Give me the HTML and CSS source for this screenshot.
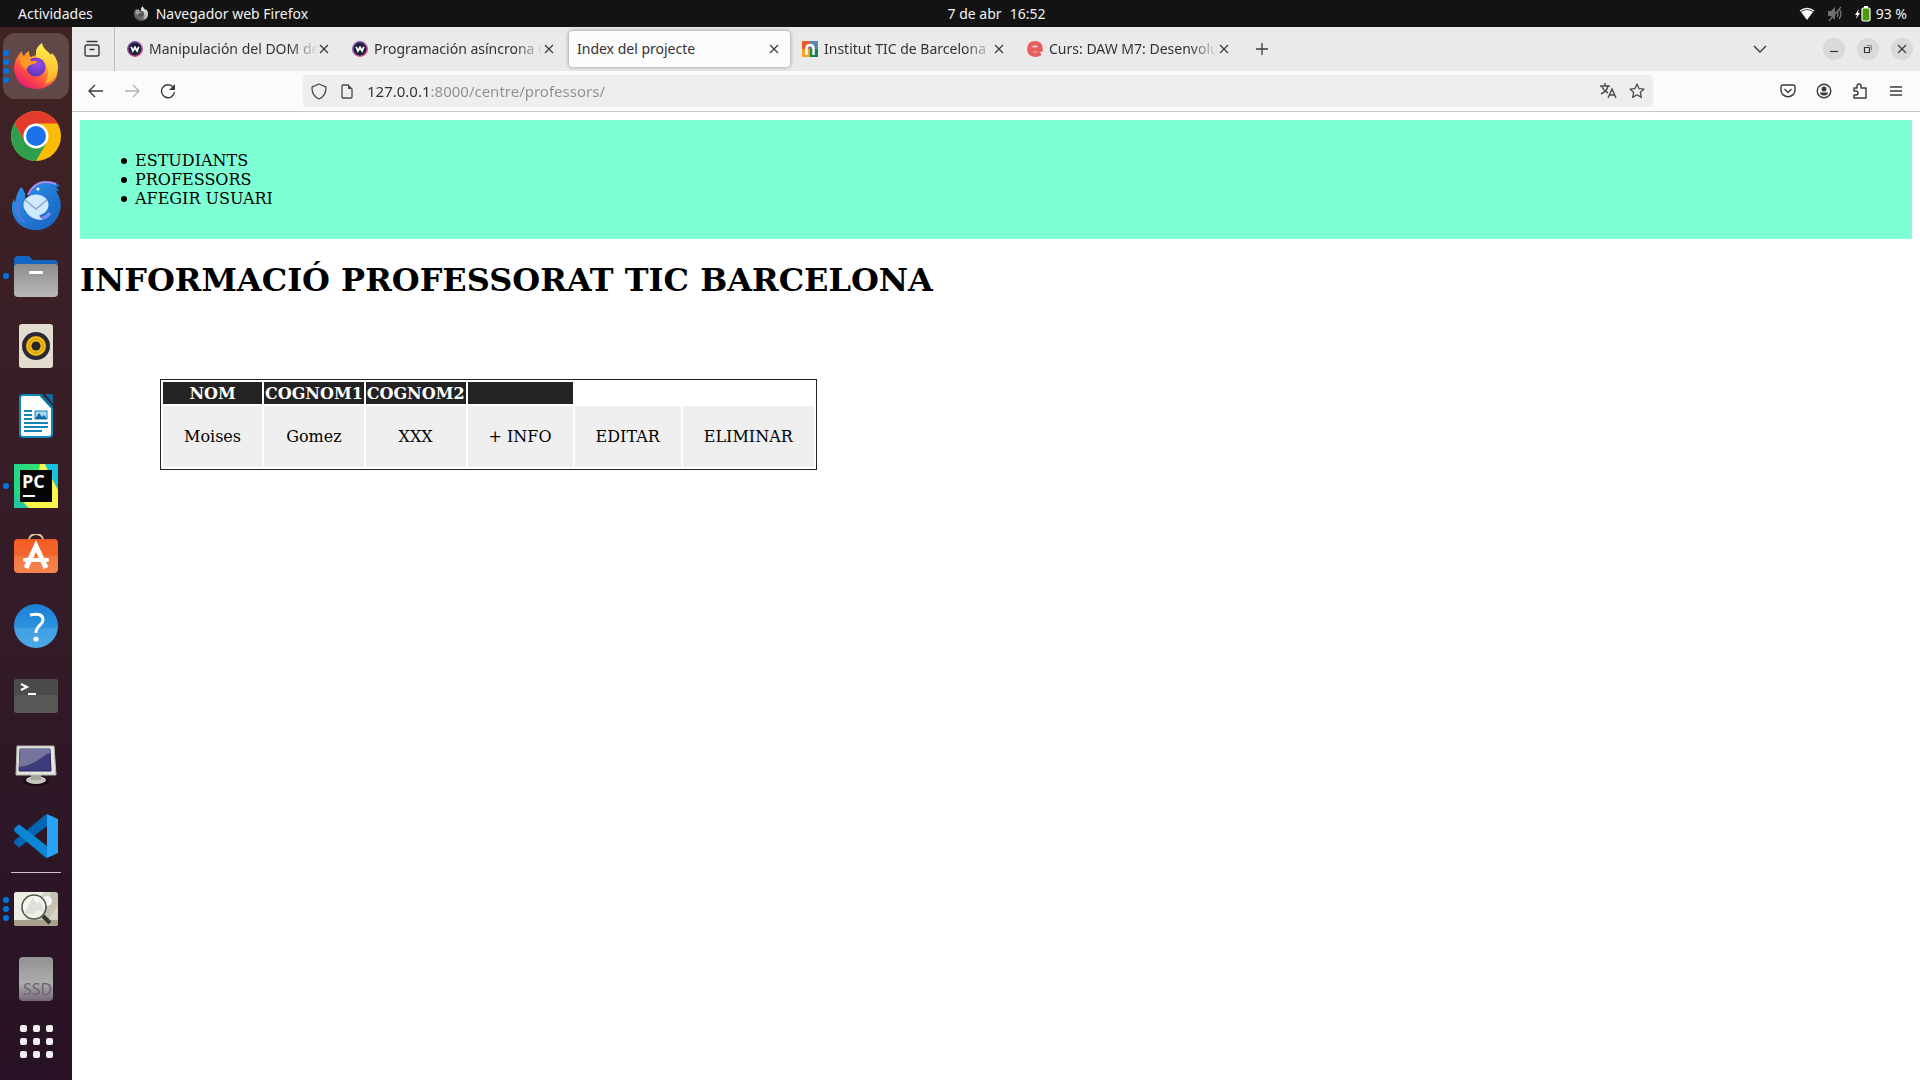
FILE: index.html
```html
<!DOCTYPE html>
<html lang="ca">
<head>
<meta charset="utf-8">
<title>Index del projecte</title>
<link rel="stylesheet" href="styles.css">
</head>
<body>
<svg class="defs" width="0" height="0" aria-hidden="true">
  <defs>
    <linearGradient id="ff-body" x1="1" y1="0" x2="0.2" y2="1"><stop offset="0" stop-color="#ffe33b"/><stop offset=".4" stop-color="#ff9a2c"/><stop offset=".7" stop-color="#ff4a45"/><stop offset="1" stop-color="#e0147a"/></linearGradient>
    <linearGradient id="ff-flame" x1="0" y1="0" x2="0" y2="1"><stop offset="0" stop-color="#fff04d"/><stop offset="1" stop-color="#ffb029"/></linearGradient>
    <radialGradient id="ff-globe" cx=".6" cy=".35" r=".7"><stop offset="0" stop-color="#9b4bea"/><stop offset="1" stop-color="#5a35b8"/></radialGradient>
    <linearGradient id="grey-v" x1="0" y1="0" x2="0" y2="1"><stop offset="0" stop-color="#8d8d8d"/><stop offset="1" stop-color="#b9b9b9"/></linearGradient>
    <linearGradient id="tb-blue" x1="0" y1="0" x2="1" y2="1"><stop offset="0" stop-color="#2f95f0"/><stop offset="1" stop-color="#1560bd"/></linearGradient>
    <linearGradient id="store" x1="0" y1="0" x2="0" y2="1"><stop offset="0" stop-color="#f45b22"/><stop offset=".5" stop-color="#f4672f"/><stop offset=".5" stop-color="#f37840"/><stop offset="1" stop-color="#f48450"/></linearGradient>
    <linearGradient id="help" x1="0" y1="0" x2="0" y2="1"><stop offset="0" stop-color="#1c7fd6"/><stop offset=".54" stop-color="#2b93df"/><stop offset=".54" stop-color="#409fe2"/><stop offset="1" stop-color="#4da9e8"/></linearGradient>
    <linearGradient id="ssd" x1="0" y1="0" x2="0" y2="1"><stop offset="0" stop-color="#929292"/><stop offset=".6" stop-color="#adadad"/><stop offset="1" stop-color="#75687a"/></linearGradient>
    <linearGradient id="pc" x1="0" y1="0" x2="1" y2="0"><stop offset="0" stop-color="#21d789"/><stop offset="1" stop-color="#3bea62"/></linearGradient>
    <linearGradient id="ring" x1="0" y1="0" x2="1" y2="1"><stop offset="0" stop-color="#6a55c8"/><stop offset="1" stop-color="#e0457f"/></linearGradient>
    <symbol id="firefox" viewBox="0 0 44 46">
      <path fill="url(#ff-body)" d="M0 26C0 19 3 13 8 8c0 2 0 4 2 5 1-2 3-4 5-5 0 3 0 5 2 6 6-3 13-3 17 0 4-3 6 3 8 7 6 14-6 25-20 25S1 37 0 26z"/>
      <path fill="url(#ff-flame)" d="M28 0c1 6 6 8 9 12l1-2c5 5 6 10 6 15-1 9-7 14-13 16 3-6 4-14 1-19-4-4-11-4-10-12 0-5 3-8 6-10z"/>
      <circle cx="22" cy="24" r="9.500" fill="url(#ff-globe)"/>
      <path fill="#ff9724" d="M6 14c5-2 9 0 11 4h6c0 3-4 3-7 4-3 2-3 4-4 4-4-2-7-6-6-12z"/>
    </symbol>
    <symbol id="close" viewBox="0 0 10 10"><path d="M1 1l8 8M9 1L1 9" fill="none" stroke="#3b3b3b" stroke-width="1.2"/></symbol>
    <symbol id="w-logo" viewBox="0 0 16 16"><circle cx="8" cy="8" r="7.2" fill="#1b2238" stroke="url(#ring)" stroke-width="1.5"/><path d="M4.2 5.8l1.7 4.2L8 6.3l2.1 3.7 1.7-4.2" fill="none" stroke="#fff" stroke-width="1.7"/></symbol>
  </defs>
</svg>

<header class="topbar">
  <div class="topbar-left">
    <button class="bar-item" type="button">Actividades</button>
    <button class="bar-item" type="button"><svg class="mono" width="14" height="15"><use href="#firefox"/></svg>Navegador web Firefox</button>
  </div>
  <button class="bar-item clock" type="button"><span>7 de abr</span><span>16:52</span></button>
  <div class="topbar-status">
    <svg width="16" height="14" viewBox="0 0 16 14"><path fill="#fff" d="M8 13L2 5q6-4 12 0z"/><path d="M1 4q7-5 14 0" fill="none" stroke="#fff" stroke-width="1.4"/></svg>
    <svg width="16" height="16" viewBox="0 0 16 16"><path fill="#6f6f6f" d="M1 5h3l4-4v13l-4-4H1z"/><path d="M10 5q2 3 0 6M12 3q4 5 0 10M14 1L2 15" fill="none" stroke="#6f6f6f" stroke-width="1.4"/></svg>
    <span class="battery"><svg width="16" height="16" viewBox="0 0 16 16"><path fill="#fff" d="M4 3L0 9h2l-1 4 4-6H3z"/><rect x="7" y="2" width="8" height="13" rx="1.5" fill="#4e9a06" stroke="#fff" stroke-width="1.2"/><path fill="#fff" d="M9 0h4v2H9z"/></svg>93 %</span>
  </div>
</header>

<div class="desktop">
  <nav class="dock" aria-label="Aplicaciones">
    <div class="dock-list">
      <button class="app active" type="button" aria-label="Firefox"><span class="dots"><i></i><i></i><i></i><i></i></span><svg width="44" height="46"><use href="#firefox"/></svg></button>
      <button class="app" type="button" aria-label="Chrome"><svg width="50" height="50" viewBox="0 0 50 50"><circle cx="25" cy="25" r="25" fill="#fbbc05"/><path fill="#e33b2e" d="M3.4 12.5a25 25 0 0 1 43.2 0H25L14.2 31.2z"/><path fill="#2f9e4d" d="M3.4 12.5A25 25 0 0 0 25 50l10.8-18.7H14.2z"/><circle cx="25" cy="25" r="12.5" fill="#fff"/><circle cx="25" cy="25" r="10" fill="#1a73e8"/></svg></button>
      <button class="app" type="button" aria-label="Thunderbird"><svg width="50" height="50" viewBox="0 0 50 50"><path fill="url(#tb-blue)" d="M10 6c4 4 5 8 4 14h3C19 8 26 1 36 1c6 0 10 1 13 4l-4 1 3 4h-3c4 6 6 12 4 20-3 11-12 19-23 19C12 49 2 41 1 28c0-4 0-7 2-10l1 4C5 15 7 10 10 6z"/><path d="M17 14C21 5 27 1 35 1q5 0 10 2" fill="none" stroke="#a58cf2" stroke-width="2"/><path d="M8 19C5 27 6 36 13 41" fill="none" stroke="#5676dc" stroke-width="2.500"/><path d="M17 31c5 8 16 9 22 1" fill="none" stroke="#7c8df0" stroke-width="3"/><ellipse cx="25" cy="24" rx="12.500" ry="10.500" fill="#cfeaff"/><path fill="#cfeaff" d="M15 31q5 7 16 8-3-3-3-6z"/><path d="M14 19l11 9 11-9" fill="none" stroke="#8fa8c4" stroke-width="1.500"/><circle cx="27" cy="8" r="1.500" fill="#fff"/></svg></button>
      <button class="app" type="button" aria-label="Archivos"><span class="dots"><i></i></span><svg width="44" height="41" viewBox="0 0 44 41"><path fill="#1166c2" d="M0 12V4q0-4 4-4h11l4 4h21q4 0 4 4v8H0z"/><rect y="8" width="44" height="33" rx="4" fill="url(#grey-v)"/><rect x="15" y="15" width="14" height="3" rx="1" fill="#fff"/></svg></button>
      <button class="app" type="button" aria-label="Rhythmbox"><svg width="34" height="44" viewBox="0 0 34 44"><rect width="34" height="44" rx="3" fill="#e3ddd0"/><circle cx="17" cy="22" r="14" fill="#2b2733"/><circle cx="17" cy="22" r="10" fill="#edb916"/><circle cx="17" cy="22" r="7" fill="none" stroke="#c7960c"/><circle cx="17" cy="22" r="4.5" fill="#26262b"/></svg></button>
      <button class="app" type="button" aria-label="LibreOffice Writer"><svg width="34" height="44" viewBox="0 0 34 44"><path fill="#fff" stroke="#1684b8" stroke-width="2" d="M4 1h17l12 13v26q0 3-3 3H4q-3 0-3-3V4q0-3 3-3z"/><path fill="#0d6ba0" d="M20 0h3l11 12v3zM26 0h6q2 0 2 2v8z"/><path d="M5 17h8M5 21h8M5 25h8M5 29h24M5 33h24M5 37h18" stroke="#1684b8" stroke-width="2"/><rect x="16" y="17" width="12" height="8" fill="#a6d9f0" stroke="#1684b8"/><path fill="#0d6ba0" d="M16 25l4-6 3 4 2-2 3 4z"/></svg></button>
      <button class="app" type="button" aria-label="PyCharm"><span class="dots"><i></i></span><svg width="44" height="44" viewBox="0 0 44 44"><path fill="url(#pc)" d="M0 0h44v44H0z"/><path fill="#14c4df" d="M30 0h14v27z"/><path fill="#fcf84a" d="M26 0h5l4 9 9 17v18H14l-6-8L25 6z"/><path fill="#23c7a0" d="M0 28v16h15l-8-7z"/><path fill="#050505" d="M6 6h32v32H6z"/><text x="8" y="24" class="pc-text">PC</text><path fill="#fff" d="M9 31h12v2H9z"/></svg></button>
      <button class="app" type="button" aria-label="Software"><svg width="44" height="44" viewBox="0 3 44 44"><path d="M15 12V9a7 6 0 0 1 14 0v3" fill="none" stroke="#e6c494" stroke-width="2"/><rect y="8" width="44" height="34" rx="4" fill="url(#store)"/><path d="M12 37L22 15l10 22" fill="none" stroke="#fff" stroke-width="5"/><path d="M11 29h22" stroke="#fff" stroke-width="4" stroke-linecap="round"/></svg></button>
      <button class="app" type="button" aria-label="Ayuda"><svg width="44" height="44" viewBox="0 0 44 44"><circle cx="22" cy="22" r="22" fill="url(#help)"/><path d="M16 11q13-3 13 5c0 5-7 5-7 13" fill="none" stroke="#fff" stroke-width="3"/><circle cx="22" cy="35" r="2.6" fill="#fff"/></svg></button>
      <button class="app" type="button" aria-label="Terminal"><svg width="44" height="34" viewBox="0 0 44 34"><rect width="44" height="34" rx="3" fill="#575757"/><path fill="#4b4b4b" d="M0 16V3q0-3 3-3h38q3 0 3 3v13z"/><path d="M7 5l6 3-6 3M14 15h8" fill="none" stroke="#fff" stroke-width="2"/></svg></button>
      <button class="app" type="button" aria-label="Monitor"><svg width="42" height="42" viewBox="0 0 42 42"><ellipse cx="21" cy="36" rx="13" ry="5" fill="#1a0b18"/><ellipse cx="21" cy="35" rx="10" ry="4" fill="#c6c7c1"/><path fill="#a5a69f" d="M16 30h10v5H16z"/><path fill="#e5e5df" stroke="#b5b5ae" d="M2 1h37l2 29H1z"/><path fill="#3c3c7c" stroke="#292961" d="M5 4h30l1 22H4z"/><path fill="#74749c" d="M5 4h30v4C27 10 22 20 4 22z"/></svg></button>
      <button class="app" type="button" aria-label="Visual Studio Code"><svg width="44" height="44" viewBox="0 0 44 44"><path fill="#0066b3" d="M33 0v12L6 33q-1 1-2 0l-4-4q0-2 1-3L31 1z"/><path fill="#0a86d5" d="M33 44V32L6 11q-1-1-2 0l-4 4q0 2 1 3l30 25z"/><path fill="#28a2f2" d="M33 0l11 5v34l-11 5z"/></svg></button>
    </div>
    <div class="dock-separator"></div>
    <div class="dock-list">
      <button class="app" type="button" aria-label="Visor de imágenes"><span class="dots"><i></i><i></i><i></i></span><svg width="44" height="34" viewBox="0 0 44 34"><rect width="44" height="34" rx="3" fill="#d6d2c4"/><path fill="#eeede4" d="M3 0h27L12 28H0V3q0-3 3-3z"/><path fill="#bbb6a5" d="M44 3v10L34 28H20L38 0h3z" opacity=".6"/><path fill="#aaa28c" d="M0 28h44v3q0 3-3 3H3q-3 0-3-3z"/><circle cx="33" cy="9" r="5" fill="#f4f4f0"/><circle cx="20" cy="15" r="12" fill="#f7f7f4" fill-opacity=".8" stroke="#55554f" stroke-width="1.6"/><path fill="#dededa" d="M10 22l9-17 4 7 3-3 4 11-7-2-3 4z"/><path d="M29 24l7 7" stroke="#333" stroke-width="4"/></svg></button>
      <button class="app" type="button" aria-label="SSD"><svg width="34" height="44" viewBox="0 0 34 44"><rect width="34" height="44" rx="4" fill="url(#ssd)"/><text x="4" y="38" class="ssd-text">SSD</text></svg></button>
    </div>
    <button class="app-grid" type="button" aria-label="Mostrar aplicaciones"><i></i><i></i><i></i><i></i><i></i><i></i><i></i><i></i><i></i></button>
  </nav>

  <div class="browser">
    <div class="tabstrip">
      <button class="icon-button recent" type="button" aria-label="Pestañas recientes"><svg width="18" height="18" viewBox="0 0 18 18"><path d="M4 1.5h10M2 7q0-2 2-2h10q2 0 2 2v7q0 2-2 2H4q-2 0-2-2zM7 9.5h4" fill="none" stroke="#3b3b3b" stroke-width="1.4" stroke-linecap="round"/></svg></button>
      <div class="tabs">
        <div class="tab"><svg width="16" height="16"><use href="#w-logo"/></svg><button class="tab-title fade" type="button">Manipulación del DOM de</button><button class="tab-close" type="button" aria-label="Cerrar"><svg width="10" height="10"><use href="#close"/></svg></button></div>
        <div class="tab"><svg width="16" height="16"><use href="#w-logo"/></svg><button class="tab-title fade" type="button">Programación asíncrona c</button><button class="tab-close" type="button" aria-label="Cerrar"><svg width="10" height="10"><use href="#close"/></svg></button></div>
        <div class="tab selected"><button class="tab-title" type="button">Index del projecte</button><button class="tab-close" type="button" aria-label="Cerrar"><svg width="10" height="10"><use href="#close"/></svg></button></div>
        <div class="tab"><svg width="16" height="16" viewBox="0 0 16 16"><path fill="#f15a29" d="M0 0h8v8H0z"/><path fill="#5b87ad" d="M8 0h8v8H8z"/><path fill="#f6a21b" d="M0 8h8v8H0z"/><path fill="#16834e" d="M8 8h8v8H8z"/><path d="M4.5 14V8q0-4 3.500-4t3.500 4v6" fill="none" stroke="#fff" stroke-width="2.500"/></svg><button class="tab-title fade" type="button">Institut TIC de Barcelona</button><button class="tab-close" type="button" aria-label="Cerrar"><svg width="10" height="10"><use href="#close"/></svg></button></div>
        <div class="tab"><svg width="16" height="16" viewBox="0 0 16 16"><path d="M4 8.500h9.500Q13.500 2.300 8 2.300T2.300 8t6 5.700q3 0 5-1.700" fill="none" stroke="#e85d5d" stroke-width="4.400"/></svg><button class="tab-title fade" type="button">Curs: DAW M7: Desenvolu</button><button class="tab-close" type="button" aria-label="Cerrar"><svg width="10" height="10"><use href="#close"/></svg></button></div>
        <button class="icon-button" type="button" aria-label="Nueva pestaña"><svg width="14" height="14" viewBox="0 0 14 14"><path d="M7 1v12M1 7h12" stroke="#3b3b3b" stroke-width="1.300"/></svg></button>
      </div>
      <button class="icon-button" type="button" aria-label="Listar pestañas"><svg width="14" height="8" viewBox="0 0 14 8"><path d="M1 1l6 6 6-6" fill="none" stroke="#3b3b3b" stroke-width="1.400"/></svg></button>
      <div class="window-buttons">
        <button type="button" aria-label="Minimizar"><svg width="10" height="10" viewBox="0 0 10 10"><path d="M1 7.500h8" stroke="#333" stroke-width="1.200"/></svg></button>
        <button type="button" aria-label="Restaurar"><svg width="10" height="10" viewBox="0 0 10 10"><path d="M1.500 3.500h5v5h-5z" fill="none" stroke="#333" stroke-width="1.200"/><path d="M3.500 1.500h5v5" fill="none" stroke="#888"/></svg></button>
        <button type="button" aria-label="Cerrar ventana"><svg width="10" height="10"><use href="#close"/></svg></button>
      </div>
    </div>

    <div class="toolbar">
      <div class="tool-group">
        <button class="icon-button" type="button" aria-label="Atrás"><svg width="16" height="14" viewBox="0 0 16 14"><path d="M7 1L1 7l6 6M1 7h14" fill="none" stroke="#3b3b3b" stroke-width="1.400"/></svg></button>
        <button class="icon-button" type="button" aria-label="Adelante" disabled><svg width="16" height="14" viewBox="0 0 16 14"><path d="M9 1l6 6-6 6M15 7H1" fill="none" stroke="#b3b3b3" stroke-width="1.400"/></svg></button>
        <button class="icon-button" type="button" aria-label="Recargar"><svg width="16" height="16" viewBox="0 0 16 16"><path d="M13 4a6.500 6.500 0 1 0 1.500 5" fill="none" stroke="#3b3b3b" stroke-width="1.400"/><path fill="#3b3b3b" d="M15 1v6H9z"/></svg></button>
      </div>
      <div class="urlbar">
        <svg width="16" height="17" viewBox="0 0 16 17"><path d="M8 1l6 2.500q1 0 1 1.500 0 8-7 11Q1 13 1 5q0-1.500 1-1.500z" fill="none" stroke="#4b4b4b" stroke-width="1.300"/></svg>
        <svg width="16" height="15" viewBox="0 0 12 15"><path d="M2 1h5l4 4v8q0 1-1 1H2q-1 0-1-1V2q0-1 1-1z" fill="none" stroke="#4b4b4b" stroke-width="1.300"/><path fill="#4b4b4b" d="M7 1v4h4z"/></svg>
        <input type="text" aria-label="Dirección" value="127.0.0.1:8000/centre/professors/">
        <svg width="17" height="16" viewBox="0 0 17 16"><path d="M0 3h10M5 0v3M8 3q-1 5-7 8M2 4q2 4 6 6M8 15l4-9 4 9M9.500 12h5" fill="none" stroke="#4b4b4b" stroke-width="1.400"/></svg>
        <svg width="16" height="16" viewBox="0 0 16 16"><path d="M8 1l2 4.600 5 .5-3.700 3.300 1.100 5L8 11.800l-4.400 2.600 1.100-5L1 6.100l5-.5z" fill="none" stroke="#4b4b4b" stroke-width="1.300" stroke-linejoin="round"/></svg>
      </div>
      <div class="tool-group">
        <button class="icon-button" type="button" aria-label="Pocket"><svg width="16" height="14" viewBox="0 0 16 14"><path d="M3 1h10q2 0 2 2v3q0 4-4 6-3 1.500-6 0-4-2-4-6V3q0-2 2-2zM4.500 5L8 8.500 11.500 5" fill="none" stroke="#3b3b3b" stroke-width="1.400"/></svg></button>
        <button class="icon-button" type="button" aria-label="Cuenta"><svg width="16" height="16" viewBox="0 0 16 16"><circle cx="8" cy="8" r="6.800" fill="none" stroke="#3b3b3b" stroke-width="1.400"/><circle cx="8" cy="6" r="2.500" fill="#3b3b3b"/><path fill="#3b3b3b" d="M4 9.500h8q0 3-4 3t-4-3z"/></svg></button>
        <button class="icon-button" type="button" aria-label="Extensiones"><svg width="16" height="16" viewBox="0 0 16 16"><path d="M5 5V3q0-2 2-2t2 2v2h5v10H2v-3h2q2 0 2-2t-2-2H2V5z" fill="none" stroke="#3b3b3b" stroke-width="1.400" stroke-linejoin="round"/></svg></button>
        <button class="icon-button" type="button" aria-label="Menú"><svg width="12" height="10" viewBox="0 0 12 10"><path d="M0 1h12M0 5h12M0 9h12" stroke="#3b3b3b" stroke-width="1.300"/></svg></button>
      </div>
    </div>

    <main class="page">
      <nav class="page-nav">
        <ul>
          <li><a href="#estudiants">ESTUDIANTS</a></li>
          <li><a href="#professors">PROFESSORS</a></li>
          <li><a href="#afegir">AFEGIR USUARI</a></li>
        </ul>
      </nav>
      <h1>INFORMACIÓ PROFESSORAT TIC BARCELONA</h1>
      <table>
        <thead><tr><th>NOM</th><th>COGNOM1</th><th>COGNOM2</th><th></th></tr></thead>
        <tbody><tr><td>Moises</td><td>Gomez</td><td>XXX</td><td><a href="#info">+ INFO</a></td><td><a href="#editar">EDITAR</a></td><td><a href="#eliminar">ELIMINAR</a></td></tr></tbody>
      </table>
    </main>
  </div>
</div>
</body>
</html>
```
FILE: styles.css
```css
* { box-sizing: border-box; }

body {
  margin: 0;
  min-height: 100vh;
  display: flex;
  flex-direction: column;
  background: #fff;
  font: 14px/20px "Noto Sans", "Open Sans", sans-serif;
}

button {
  margin: 0;
  padding: 0;
  border: 0;
  background: none;
  color: inherit;
  font: inherit;
}

svg { display: block; flex: none; }
.defs { position: absolute; }

/* System bar */
.topbar {
  height: 27px;
  padding: 0 13px 0 18px;
  display: grid;
  grid-template-columns: 1fr auto 1fr;
  align-items: center;
  background: #131313;
  color: #f2f2f2;
}
.topbar-left { display: flex; gap: 41px; }
.bar-item { display: flex; align-items: center; gap: 8px; white-space: nowrap; }
.mono { filter: grayscale(1); }
.clock { padding-left: 68px; }
.topbar-status { display: flex; justify-content: flex-end; align-items: center; gap: 12px; }
.battery { display: flex; align-items: center; gap: 5px; }

.desktop { flex: 1; display: flex; }

/* Dock */
.dock {
  flex: none;
  width: 72px;
  padding: 6px 0 12px;
  display: flex;
  flex-direction: column;
  align-items: center;
  background: linear-gradient(#402324, #331b27 55%, #271225);
}
.dock-list { display: flex; flex-direction: column; gap: 4px; }
.app {
  position: relative;
  width: 66px;
  height: 66px;
  display: flex;
  align-items: center;
  justify-content: center;
  border-radius: 12px;
}
.app.active { background: #604849; }
.dots {
  position: absolute;
  left: 0;
  top: 0;
  bottom: 0;
  display: flex;
  flex-direction: column;
  justify-content: center;
  gap: 3px;
}
.dots i { width: 6px; height: 6px; border-radius: 50%; background: #0073e5; }
.dock-separator { width: 50px; height: 7px; padding: 3px 0; background: #c9c2c8 content-box; }
.app-grid {
  margin-top: auto;
  height: 54px;
  display: grid;
  grid-template-columns: repeat(3, 7px);
  grid-auto-rows: 7px;
  align-content: center;
  gap: 6px;
}
.app-grid i { border-radius: 2px; background: #f0eef0; }
.pc-text { font: bold 18px "Open Sans", sans-serif; fill: #fff; }
.ssd-text { font: 16px "Noto Sans", sans-serif; fill: #6b6470; }

/* Browser window */
.browser { flex: 1; min-width: 0; display: flex; flex-direction: column; }
.tabstrip {
  height: 44px;
  padding-right: 7px;
  display: flex;
  align-items: center;
  background: #eaeaea;
  color: #333;
}
.icon-button {
  width: 36px;
  height: 36px;
  display: flex;
  align-items: center;
  justify-content: center;
}
.recent { width: 43px; height: 44px; padding-right: 3px; border-right: 1px solid #bcbcbc; }
.tabs { flex: 1; min-width: 0; padding-left: 4px; display: flex; align-items: center; gap: 4px; }
.tab {
  width: 221px;
  height: 36px;
  padding: 0 6px 0 8px;
  display: flex;
  align-items: center;
  gap: 6px;
  border-radius: 4px;
}
.tab.selected { background: #fcfcfc; box-shadow: 0 0 4px #8c8c8c; }
.tab-title {
  flex: 1;
  min-width: 0;
  overflow: hidden;
  white-space: nowrap;
  text-align: left;
}
.fade {
  -webkit-mask-image: linear-gradient(to left, transparent, #000 28px);
  mask-image: linear-gradient(to left, transparent, #000 28px);
}
.tab-close { width: 20px; height: 20px; margin-left: -10px; display: grid; place-items: center; }
.window-buttons { margin-left: 45px; display: flex; gap: 12px; }
.window-buttons button {
  width: 22px;
  height: 22px;
  display: grid;
  place-items: center;
  border-radius: 50%;
  background: #dadada;
}

.toolbar {
  height: 41px;
  padding: 0 6px;
  display: flex;
  align-items: center;
  gap: 117px;
  background: #fbfbfb;
  border-bottom: 1px solid #c6c6c6;
}
.tool-group { display: flex; }
.urlbar {
  flex: 1;
  height: 32px;
  padding: 0 8px;
  display: flex;
  align-items: center;
  gap: 12px;
  border-radius: 4px;
  background: #eee;
}
.urlbar input {
  flex: 1;
  min-width: 0;
  padding: 0;
  border: 0;
  outline: 0;
  font: inherit;
  font-size: 15px;
  color: transparent;
  background: linear-gradient(90deg, #303030 64px, #8f8f8f 64px);
  -webkit-background-clip: text;
  background-clip: text;
}

/* Web page */
.page { flex: 1; padding: 8px; color: #000; font: 16px/19px "DejaVu Serif", serif; }
.page a { color: inherit; text-decoration: none; }
.page-nav { padding: 15px; background: aquamarine; }
.page-nav ul { margin: 16px 0; padding-left: 26px; list-style: none; }
.page-nav li { display: flex; align-items: center; gap: 8px; }
.page-nav li::before { content: ""; width: 6px; height: 6px; border-radius: 50%; background: #000; }
.page h1 { margin: 22px 0 80px; font-size: 32px; line-height: 38px; }
.page table { margin-left: 80px; border: 1px solid #232323; border-spacing: 2px; text-align: center; }
.page th { height: 22px; padding: 1px; background: #232323; color: #fff; }
.page td { padding: 21px; background: #efefef; }
```
